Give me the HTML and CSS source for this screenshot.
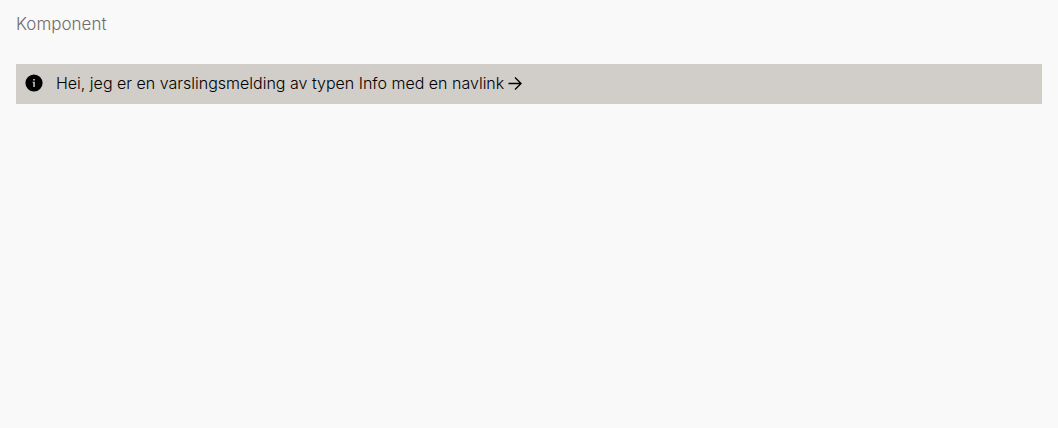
FILE: index.html
```html
<!DOCTYPE html>
<html lang="nb">
<head>
<meta charset="utf-8">
<title>Varslingsmelding</title>
<link rel="stylesheet" href="styles.css">
</head>
<body>
<main class="example">
  <h1 class="example-title">Komponent</h1>
  <div class="message" role="status">
    <svg class="message-icon" viewBox="0 0 20 20" aria-hidden="true"><path fill-rule="evenodd" d="M10 1.4a8.6 8.6 0 1 0 0 17.2 8.6 8.6 0 0 0 0-17.2ZM9.2 6h1.6v1.5H9.2ZM8.6 8.8H10.8V14H9.3V9.7H8.6Z"/></svg>
    <a class="message-link" href="#">Hei, jeg er en varslingsmelding av typen Info med en navlink<svg class="message-arrow" viewBox="0 0 14 14" aria-hidden="true"><path d="M0.5 7.5h12M7 1.5l6 6-6 6"/></svg></a>
  </div>
</main>
</body>
</html>
```

FILE: styles.css
```css
body {
  margin: 0;
  background: #f9f9f9;
  color: #000;
  font: 16px/24px Inter, "Liberation Sans", sans-serif;
}

.example {
  padding: 12px 16px;
}

.example-title {
  margin: 0 0 28px;
  color: #716c69;
  font-size: 17px;
  font-weight: 300;
}

.message {
  display: flex;
  align-items: center;
  gap: 12px;
  padding: 7px 8px 9px;
  background: #d1cdc8;
}

.message-icon {
  flex: none;
  width: 20px;
  height: 20px;
}

.message-link {
  display: flex;
  align-items: center;
  gap: 4px;
  color: inherit;
  font-weight: 300;
  text-decoration: none;
}

.message-arrow {
  flex: none;
  width: 14px;
  height: 14px;
  overflow: visible;
  fill: none;
  stroke: currentColor;
  stroke-width: 1.4;
}
```
